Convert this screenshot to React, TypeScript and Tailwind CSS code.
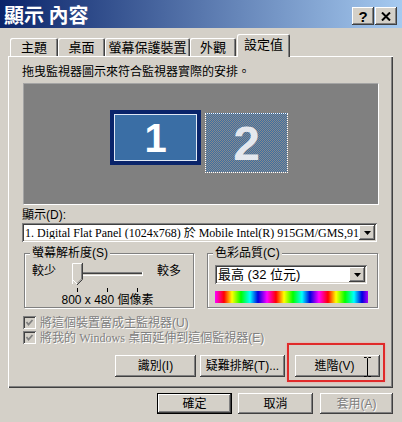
import React from "react";

const RAISED =
  "shadow-[inset_-1px_-1px_#404040,inset_1px_1px_#ffffff,inset_-2px_-2px_#808080,inset_2px_2px_#d4d0c8]";
const SUNKEN =
  "shadow-[inset_1px_1px_#808080,inset_-1px_-1px_#ffffff,inset_2px_2px_#404040,inset_-2px_-2px_#d4d0c8]";
const SANS = "font-['Liberation_Sans','Noto_Sans_CJK_TC',sans-serif]";
const SERIF = "font-['Liberation_Serif','Noto_Sans_CJK_TC',serif]";
const DISABLED = "text-[#808080] [text-shadow:1px_1px_0_#ffffff]";

function Tab({ w, children }: { w: string; children: React.ReactNode }) {
  return (
    <div
      className={`${w} h-[18px] rounded-t-[2px] bg-[#d4d0c8] shadow-[inset_1px_1px_#ffffff,inset_-1px_0_#404040,inset_-2px_0_#808080] flex items-center justify-center leading-none`}
    >
      {children}
    </div>
  );
}

function Arrow() {
  return (
    <div className={`w-[16px] h-[15px] shrink-0 bg-[#d4d0c8] ${RAISED} flex items-center justify-center`}>
      <svg width="7" height="4" viewBox="0 0 7 4">
        <path d="M0 0 H7 L3.5 4 Z" fill="#000" />
      </svg>
    </div>
  );
}

function Btn({
  children,
  className = "",
  disabled = false,
}: {
  children: React.ReactNode;
  className?: string;
  disabled?: boolean;
}) {
  return (
    <div
      className={`relative bg-[#d4d0c8] ${RAISED} flex items-center justify-center text-[12px] leading-none ${
        disabled ? DISABLED : ""
      } ${className}`}
    >
      {children}
    </div>
  );
}

function Check({ children }: { children: React.ReactNode }) {
  return (
    <div className="flex items-center h-[13px] ml-[15px]">
      <div className={`w-[13px] h-[13px] bg-[#d4d0c8] ${SUNKEN} flex items-center justify-center`}>
        <svg width="9" height="9" viewBox="0 0 9 9">
          <path d="M1.5 4 L3.5 6.5 L7.5 2" stroke="#808080" strokeWidth="1.8" fill="none" />
        </svg>
      </div>
      <span className={`ml-[4px] text-[12px] leading-none whitespace-nowrap ${DISABLED}`}>{children}</span>
    </div>
  );
}

function Group({
  label,
  className,
  children,
}: {
  label: string;
  className: string;
  children: React.ReactNode;
}) {
  return (
    <div
      className={`relative border border-[#808080] shadow-[inset_1px_1px_#ffffff,1px_1px_#ffffff] ${className}`}
    >
      <span className="absolute left-[5px] top-[-8px] bg-[#d4d0c8] px-[2px] text-[12px] leading-[14px] whitespace-nowrap">
        {label}
      </span>
      {children}
    </div>
  );
}

export default function App() {
  return (
    <div className={`w-[402px] h-[422px] bg-[#d4d0c8] overflow-hidden text-black ${SANS}`}>
      {/* Title bar */}
      <div className="h-[28px] flex items-start justify-between bg-[linear-gradient(to_right,#0a246a,#a6caf0)] pl-[4px] pr-[5px]">
        <span className="mt-[4px] text-white font-bold text-[20px] leading-[22px] font-['Noto_Sans_CJK_TC',sans-serif] whitespace-nowrap">
          顯示 內容
        </span>
        <div className="flex gap-[1px] mt-[7px]">
          <div
            className={`w-[22px] h-[18px] bg-[#d4d0c8] ${RAISED} flex items-center justify-center text-[15px] font-bold leading-none`}
          >
            ?
          </div>
          <div className={`w-[22px] h-[18px] bg-[#d4d0c8] ${RAISED} flex items-center justify-center`}>
            <svg width="10" height="9" viewBox="0 0 10 9">
              <path d="M1 0.5 L9 8.5 M9 0.5 L1 8.5" stroke="#000" strokeWidth="2" />
            </svg>
          </div>
        </div>
      </div>

      {/* Tabs */}
      <div className="h-[28px] flex items-end pl-[10px] text-[13px]">
        <Tab w="w-[48px]">主題</Tab>
        <Tab w="w-[47px]">桌面</Tab>
        <Tab w="w-[85px]">螢幕保護裝置</Tab>
        <Tab w="w-[46px]">外觀</Tab>
        <div className="relative z-10 -mb-px ml-[1px] w-[53px] h-[23px] bg-[#d4d0c8] rounded-t-[2px] shadow-[inset_1px_1px_#ffffff,inset_-1px_0_#404040,inset_-2px_0_#808080] flex items-center justify-center pb-[3px] leading-none">
          設定值
        </div>
      </div>

      {/* Panel */}
      <div className="ml-[8px] w-[385px] h-[332px] shadow-[inset_1px_1px_#ffffff,inset_-1px_-1px_#404040,inset_-2px_-2px_#808080] flex flex-col items-start text-[12px]">
        <div className="ml-[14px] mt-[8px] leading-[16px] whitespace-nowrap">
          拖曳監視器圖示來符合監視器實際的安排。
        </div>

        {/* Preview */}
        <div className="relative ml-[15px] mt-[3px] w-[356px] h-[122px] bg-[#808080] border-t border-l border-[#a4a4a4] border-r-white border-b-white border-r border-b">
          <div className="absolute left-[86px] top-[26px] w-[91px] h-[55px] bg-[#0a246a] p-[4px]">
            <div className="w-full h-full border border-[#dfe8f5] bg-[#3a6ea5] flex items-center justify-center">
              <span className="text-white font-bold text-[40px] leading-none font-['Liberation_Sans',sans-serif] mt-[1px]">
                1
              </span>
            </div>
          </div>
          <div className="absolute left-[181px] top-[29px] w-[83px] h-[60px] border border-dotted border-white bg-[repeating-conic-gradient(#3a6ea5_0_25%,#8a8a8a_0_50%)] bg-[length:2px_2px] flex items-center justify-center">
            <span className="text-[#e4e8ee] font-bold text-[48px] leading-none font-['Liberation_Sans',sans-serif] mt-[2px]">
              2
            </span>
          </div>
        </div>

        <div className="ml-[14px] mt-[2px] leading-[16px]">顯示(D):</div>
        <div className={`ml-[14px] w-[355px] h-[19px] bg-white ${SUNKEN} flex items-center pr-[2px]`}>
          <div className={`flex-1 min-w-0 overflow-hidden whitespace-nowrap pl-[3px] text-[12px] leading-none ${SERIF}`}>
            1. Digital Flat Panel (1024x768) 於 Mobile Intel(R) 915GM/GMS,910GML
          </div>
          <Arrow />
        </div>

        {/* Group boxes */}
        <div className="flex mt-[11px] ml-[16px]">
          <Group label="螢幕解析度(S)" className="w-[170px] h-[55px] pl-[7px] pt-[9px]">
            <div className="flex items-start">
              <span className="leading-[14px] mt-[1px] whitespace-nowrap">較少</span>
              <div className="flex flex-col items-center ml-[14px] w-[75px]">
                <svg width="75" height="31" viewBox="0 0 75 31">
                  <rect x="10" y="9" width="62" height="1" fill="#808080" />
                  <rect x="10" y="10" width="62" height="1" fill="#404040" />
                  <rect x="10" y="11" width="62" height="1" fill="#d4d0c8" />
                  <rect x="10" y="12" width="63" height="1" fill="#ffffff" />
                  <rect x="10" y="9" width="1" height="3" fill="#808080" />
                  <rect x="72" y="9" width="1" height="4" fill="#ffffff" />
                  <polygon points="2,0 12,0 12,16 7,21 2,16" fill="#d4d0c8" />
                  <polyline points="2.5,21 2.5,0.5 11.5,0.5" stroke="#ffffff" strokeWidth="1" fill="none" />
                  <polyline points="12.5,0 12.5,16.5 7,22" stroke="#404040" strokeWidth="1" fill="none" />
                  <polyline points="11.5,1 11.5,16 7,20.5" stroke="#808080" strokeWidth="1" fill="none" />
                  <polyline points="2.5,16.5 7,21" stroke="#ffffff" strokeWidth="1" fill="none" />
                  <rect x="7" y="25" width="1" height="4" fill="#000" />
                  <rect x="37" y="25" width="1" height="4" fill="#000" />
                  <rect x="67" y="25" width="1" height="4" fill="#000" />
                </svg>
                <span className="leading-[13px] whitespace-nowrap">800 x 480 個像素</span>
              </div>
              <span className="leading-[14px] mt-[1px] ml-[12px] whitespace-nowrap">較多</span>
            </div>
          </Group>
          <Group label="色彩品質(C)" className="ml-[13px] w-[171px] h-[55px] pl-[7px] pt-[11px]">
            <div className={`w-[152px] h-[19px] bg-white ${SUNKEN} flex items-center pr-[2px]`}>
              <span className="flex-1 pl-[3px] text-[13px] leading-none whitespace-nowrap">最高 (32 位元)</span>
              <Arrow />
            </div>
            <div className="mt-[7px] w-[153px] h-[12px] bg-[repeating-linear-gradient(to_right,#ff00ff_0px,#ff0000_9px,#ffff00_17px,#00ff00_26px,#00ffff_35px,#0000e0_43px,#ff00ff_52px)]" />
          </Group>
        </div>

        <div className="mt-[8px]">
          <Check>將這個裝置當成主監視器(U)</Check>
        </div>
        <div className="mt-[2px]">
          <Check>
            將我的 <span className="font-['Liberation_Serif',serif]">Windows</span> 桌面延伸到這個監視器(E)
          </Check>
        </div>

        {/* Action buttons */}
        <div className="flex items-start ml-[107px] -mt-px">
          <Btn className="mt-[12px] w-[81px] h-[22px]">識別(I)</Btn>
          <Btn className="mt-[12px] ml-[4px] w-[85px] h-[22px]">疑難排解(T)...</Btn>
          <div className="ml-[2px] border-2 border-[#e02a2a] shadow-[0_0_2px_#f2a0a0] pl-[6px] pt-[10px] pr-[3px] pb-[3px]">
            <Btn className="w-[85px] h-[22px]">
              <span className="mr-[6px]">進階(V)</span>
              <svg className="absolute left-[68px] top-[2px]" width="9" height="20" viewBox="0 0 9 20">
                <path d="M1 0.5 H3.5 L4.5 1.5 L5.5 0.5 H8 M4.5 1.5 V18.5 M1 19.5 H3.5 L4.5 18.5 L5.5 19.5 H8" stroke="#000" strokeWidth="1" fill="none" />
              </svg>
            </Btn>
          </div>
        </div>
      </div>

      {/* Dialog buttons */}
      <div className="flex justify-end pr-[9px] mt-[5px]">
        <div className="w-[75px] h-[21px] border border-black">
          <Btn className="w-full h-full">確定</Btn>
        </div>
        <Btn className="ml-[6px] w-[75px] h-[21px]">取消</Btn>
        <Btn className="ml-[7px] w-[73px] h-[21px]" disabled>
          套用(A)
        </Btn>
      </div>
    </div>
  );
}
